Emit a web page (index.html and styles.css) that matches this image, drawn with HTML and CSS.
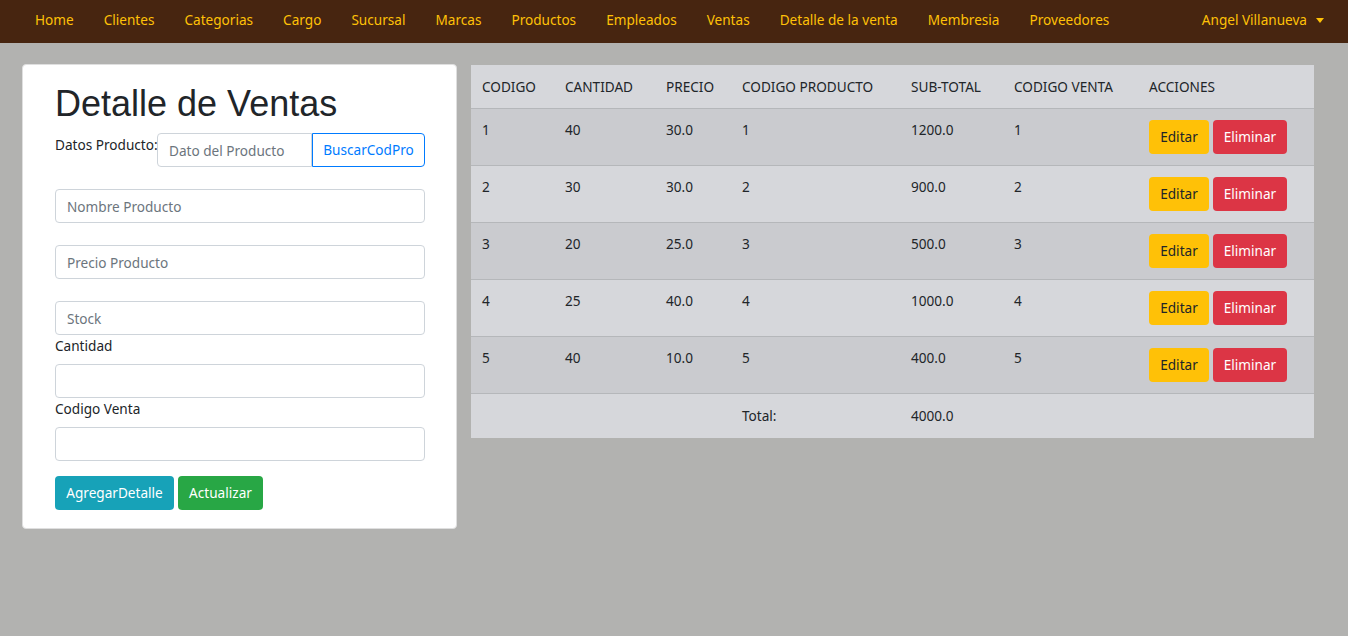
FILE: index.html
```html
<!DOCTYPE html>
<html lang="es">
<head>
<meta charset="utf-8">
<title>Detalle de Ventas</title>
<link rel="stylesheet" href="styles.css">
</head>
<body>
<nav class="navbar">
  <ul class="nav-links">
    <li><a href="#">Home</a></li>
    <li><a href="#">Clientes</a></li>
    <li><a href="#">Categorias</a></li>
    <li><a href="#">Cargo</a></li>
    <li><a href="#">Sucursal</a></li>
    <li><a href="#">Marcas</a></li>
    <li><a href="#">Productos</a></li>
    <li><a href="#">Empleados</a></li>
    <li><a href="#">Ventas</a></li>
    <li><a href="#">Detalle de la venta</a></li>
    <li><a href="#">Membresia</a></li>
    <li><a href="#">Proveedores</a></li>
  </ul>
  <a href="#" class="user">Angel Villanueva <span class="caret"></span></a>
</nav>
<main class="content">
  <section class="card">
    <h1 class="title">Detalle de Ventas</h1>
    <div class="search-row">
      <label class="lbl-inline">Datos Producto:</label>
      <div class="input-group">
        <input class="field field-group" placeholder="Dato del Producto">
        <button class="btn btn-outline">BuscarCodPro</button>
      </div>
    </div>
    <input class="field spaced" placeholder="Nombre Producto">
    <input class="field spaced" placeholder="Precio Producto">
    <input class="field spaced" placeholder="Stock">
    <label class="lbl">Cantidad</label>
    <input class="field">
    <label class="lbl">Codigo Venta</label>
    <input class="field">
    <div class="actions">
      <button class="btn btn-info">AgregarDetalle</button>
      <button class="btn btn-success">Actualizar</button>
    </div>
  </section>
  <section class="table-wrap">
    <table class="data">
      <colgroup>
        <col class="c1"><col class="c2"><col class="c3"><col class="c4"><col class="c5"><col class="c6"><col class="c7">
      </colgroup>
      <thead>
        <tr><th>CODIGO</th><th>CANTIDAD</th><th>PRECIO</th><th>CODIGO PRODUCTO</th><th>SUB-TOTAL</th><th>CODIGO VENTA</th><th>ACCIONES</th></tr>
      </thead>
      <tbody>
        <tr class="odd"><td>1</td><td>40</td><td>30.0</td><td>1</td><td>1200.0</td><td>1</td><td class="acts"><button class="btn btn-warning">Editar</button> <button class="btn btn-danger">Eliminar</button></td></tr>
        <tr><td>2</td><td>30</td><td>30.0</td><td>2</td><td>900.0</td><td>2</td><td class="acts"><button class="btn btn-warning">Editar</button> <button class="btn btn-danger">Eliminar</button></td></tr>
        <tr class="odd"><td>3</td><td>20</td><td>25.0</td><td>3</td><td>500.0</td><td>3</td><td class="acts"><button class="btn btn-warning">Editar</button> <button class="btn btn-danger">Eliminar</button></td></tr>
        <tr><td>4</td><td>25</td><td>40.0</td><td>4</td><td>1000.0</td><td>4</td><td class="acts"><button class="btn btn-warning">Editar</button> <button class="btn btn-danger">Eliminar</button></td></tr>
        <tr class="odd"><td>5</td><td>40</td><td>10.0</td><td>5</td><td>400.0</td><td>5</td><td class="acts"><button class="btn btn-warning">Editar</button> <button class="btn btn-danger">Eliminar</button></td></tr>
        <tr class="total"><td></td><td></td><td></td><td>Total:</td><td>4000.0</td><td></td><td></td></tr>
      </tbody>
    </table>
  </section>
</main>
</body>
</html>
```

FILE: styles.css
```css
* { box-sizing: border-box; }
html, body { margin: 0; padding: 0; }
body {
  background: #b2b2b0;
  font-family: "Noto Sans", "Open Sans", sans-serif;
  font-size: 13.6px;
  color: #212529;
  height: 636px;
  overflow: hidden;
}
.navbar {
  height: 43px;
  background: #472510;
  display: flex;
  align-items: center;
  justify-content: space-between;
  padding: 0 24px 3px 20px;
}
.nav-links {
  list-style: none;
  margin: 0;
  padding: 0;
  display: flex;
}
.nav-links a, .user {
  display: block;
  color: #ffc107;
  text-decoration: none;
  padding: 0 15px;
  line-height: 20px;
  font-size: 13.6px;
}
.user { padding: 0; display: flex; align-items: center; }
.caret {
  display: inline-block;
  width: 0; height: 0;
  margin-left: 9px;
  border-left: 4px solid transparent;
  border-right: 4px solid transparent;
  border-top: 5px solid #ffc107;
}
.content {
  display: flex;
  align-items: flex-start;
  padding: 21px 0 0 22px;
  gap: 14px;
}
.card {
  width: 435px;
  background: #fff;
  border: 1px solid #dfdfdf;
  border-radius: 4px;
  padding: 18px 31px 18px 32px;
  display: flex;
  flex-direction: column;
}
.title {
  font-family: "Liberation Sans", Arial, sans-serif;
  font-weight: 400;
  font-size: 36px;
  line-height: 42px;
  margin: 0 0 8px 0;
  color: #212529;
}
.search-row {
  display: flex;
  align-items: flex-start;
}
.lbl-inline {
  padding-top: 2px;
  line-height: 20px;
  white-space: nowrap;
  width: 102px;
  flex: none;
}
.input-group { display: flex; flex: 1; }
.field {
  display: block;
  width: 100%;
  height: 34px;
  border: 1px solid #ced4da;
  border-radius: 4px;
  padding: 0 11px;
  font-family: inherit;
  font-size: 13.6px;
  color: #495057;
  background: #fff;
}
.field::placeholder { color: #6c757d; }
.field-group {
  border-radius: 4px 0 0 4px;
  width: 155px;
  flex: none;
}
.spaced { margin-top: 22px; }
.lbl {
  display: block;
  line-height: 22px;
  margin-bottom: 7px;
}
.btn {
  font-family: inherit;
  font-size: 13.6px;
  height: 34px;
  line-height: 20px;
  padding: 0 10px;
  border: 1px solid transparent;
  border-radius: 4px;
  cursor: pointer;
}
.btn-outline {
  color: #007bff;
  border-color: #007bff;
  background: #fff;
  border-radius: 0 4px 4px 0;
  width: 113px;
  padding: 0;
}
.actions {
  display: flex;
  gap: 4px;
  margin-top: 15px;
}
.btn-info { background: #17a2b8; color: #fff; width: 119px; padding: 0; }
.btn-success { background: #28a745; color: #fff; width: 85px; padding: 0; }
.btn-warning { background: #ffc107; color: #212529; width: 60px; padding: 0; }
.btn-danger { background: #dc3545; color: #fff; width: 74px; padding: 0; }
.table-wrap { width: 843px; margin-top: 1px; }
.data {
  width: 843px;
  border-collapse: collapse;
  table-layout: fixed;
  background: #d6d7db;
}
.c1 { width: 83px; } .c2 { width: 101px; } .c3 { width: 76px; } .c4 { width: 169px; }
.c5 { width: 103px; } .c6 { width: 135px; } .c7 { width: 176px; }
.data th {
  font-weight: 400;
  text-align: left;
  padding: 12px 11px;
  height: 43px;
  line-height: 19px;
  vertical-align: top;
}
.data td {
  border-top: 1px solid #b5b7ba;
  padding: 11px 11px;
  height: 56px;
  line-height: 20px;
  vertical-align: top;
}
.data tr.odd td { background: #cacbcf; }
.data td.acts { white-space: nowrap; font-size: 0; }
.data td.acts .btn + .btn { margin-left: 4px; }
.data tr.total td { height: 44px; padding-top: 12px; }
```
